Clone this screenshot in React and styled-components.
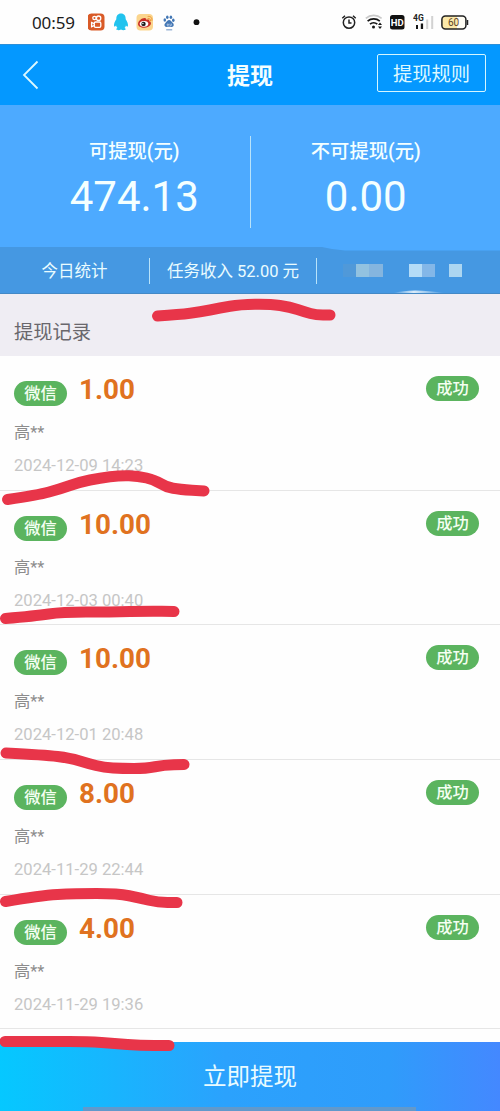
import React from "react";
import styled, { createGlobalStyle } from "styled-components";

const GlobalStyle = createGlobalStyle`
	* {
		box-sizing: border-box;
	}
	body {
		margin: 0;
		background: #fefefe;
		font-family: Roboto, "Noto Sans CJK SC", sans-serif;
	}
`;

const Page = styled.div`
	position: relative;
	display: flex;
	flex-direction: column;
	width: 500px;
	height: 1111px;
	overflow: hidden;
	background: #fefefe;
`;

const StatusBar = styled.div`
	display: flex;
	justify-content: space-between;
	align-items: center;
	height: 44px;
	padding: 0 31px 0 32px;
	background: #fefefe;
`;

const StatusGroup = styled.div`
	display: flex;
	align-items: center;
	gap: ${(props) => props.$gap};
	svg {
		display: block;
	}
`;

const Clock = styled.span`
	width: 48px;
	font-family: "Noto Sans", sans-serif;
	font-size: 17px;
	letter-spacing: -0.1px;
	color: #1c1c1c;
`;

const Header = styled.header`
	display: grid;
	grid-template-columns: 1fr auto 1fr;
	align-items: center;
	height: 61px;
	padding: 0 14px 0 22px;
	background: #0498ff;
	color: #f4feff;
	border-top: 1px solid #2c8fd8;
`;

const Title = styled.h1`
	margin: 3px 8px 0 0;
	font-size: 23px;
	font-weight: 700;
	line-height: 30px;
`;

const RulesButton = styled.button`
	justify-self: end;
	width: 109px;
	height: 38px;
	margin-bottom: 4px;
	padding: 0 0 1px;
	border: 1.5px solid #d4f6ff;
	border-radius: 2px;
	background: transparent;
	color: #dcf8ff;
	font-family: inherit;
	font-size: 19.3px;
`;

const Balances = styled.section`
	display: flex;
	align-items: flex-start;
	height: 142px;
	padding-top: 31px;
	background: #4daaff;
	color: #f4ffff;
`;

const Balance = styled.div`
	display: flex;
	flex: 1;
	flex-direction: column;
	align-items: center;
	padding-${(props) => props.$inset}: 19px;
`;

const BalanceLabel = styled.span`
	margin-top: 2px;
	font-size: 19.3px;
	font-weight: 500;
	line-height: 28px;
`;

const BalanceValue = styled.span`
	margin-top: 7px;
	font-size: 42px;
	line-height: 48px;
`;

const Divider = styled.i`
	width: 1px;
	height: ${(props) => props.$height};
	background: #b8e3fa;
`;

const Stats = styled.section`
	display: flex;
	align-items: center;
	height: 47px;
	background: #4598e2;
	color: #eafcff;
	font-size: 16.5px;
`;

const Stat = styled.span`
	width: ${(props) => props.$width};
	padding-bottom: 1px;
	text-align: center;
	white-space: nowrap;
`;

const Mosaic = styled.div`
	display: grid;
	grid-template-columns: repeat(9, 13.2px);
	height: 13px;
	margin-left: 26px;
`;

const Tile = styled.i`
	background: ${(props) => props.color};
`;

const SectionTitle = styled.h2`
	height: 62px;
	margin: 0;
	padding: 25px 14px 0;
	background: #efedf3;
	color: #69676c;
	font-size: 19.3px;
	font-weight: 400;
	line-height: 28px;
`;

const Records = styled.ul`
	height: 686px;
	margin: 0;
	padding: 0;
	list-style: none;
`;

const Record = styled.li`
	height: 134.7px;
	padding: 17px 21px 0 14px;
	border-bottom: 1px solid #e6e6e6;
`;

const RecordTop = styled.div`
	display: flex;
	height: 33px;
`;

const Badge = styled.span`
	align-self: ${(props) => props.$align};
	width: 53px;
	height: 25px;
	margin-top: 3px;
	border-radius: 13px;
	background: #5bb45f;
	color: #f4fff2;
	font-size: 16.3px;
	font-weight: 500;
	line-height: 26px;
	text-align: center;
`;

const Amount = styled.strong`
	flex: 1;
	padding-left: 12px;
	color: #e07220;
	font-size: 27.8px;
	font-weight: 700;
	line-height: 33px;
`;

const Name = styled.div`
	margin-top: 16px;
	color: #8c8c8c;
	font-size: 16.3px;
	line-height: 22px;
`;

const Time = styled.div`
	margin-top: 11px;
	color: #c6c6c6;
	font-size: 16.6px;
	line-height: 22px;
`;

const Submit = styled.button`
	height: 69px;
	padding: 0 0 3px;
	border: 0;
	background: linear-gradient(90deg, #05c8ff 0%, #2ba2fd 45%, #2f9cfb 78%, #4488ff 100%);
	color: #e9fbff;
	font-family: inherit;
	font-size: 23.5px;
`;

/* pen strokes drawn over the whole screen */
const Marks = styled.svg`
	position: absolute;
	top: 0;
	left: 0;
	pointer-events: none;
`;

const records = [
	{ amount: "1.00", time: "2024-12-09 14:23" },
	{ amount: "10.00", time: "2024-12-03 00:40" },
	{ amount: "10.00", time: "2024-12-01 20:48" },
	{ amount: "8.00", time: "2024-11-29 22:44" },
	{ amount: "4.00", time: "2024-11-29 19:36" },
];

const tiles = [
	"#5099d9",
	"#92c2e0",
	"#84b5df",
	"transparent",
	"transparent",
	"#b4dcf7",
	"#83b7e8",
	"transparent",
	"#acd6f1",
];

const strokes = [
	[[157.5, 316], [180, 314.5], [200, 312], [220, 308], [240, 304.5], [270, 304], [290, 307], [305, 312], [316, 315], [330, 315]],
	[[7.5, 499.5], [38, 495], [60, 489], [80, 482], [100, 478], [120, 475.5], [138, 476], [155, 480], [166, 487], [180, 489.5], [204, 491]],
	[[5.5, 618.5], [35, 616], [62, 612], [110, 612], [150, 611], [174, 611.5]],
	[[6, 753], [45, 755], [70, 758], [88, 763.5], [104, 767.5], [122, 768.5], [146, 768.5], [164, 765], [184, 764.5]],
	[[5.5, 901.5], [40, 895.5], [75, 893.5], [118, 893.5], [140, 898], [158, 902.5], [177, 902.5]],
	[[5, 1041.5], [50, 1041.5], [88, 1041.5], [115, 1043.5], [140, 1045.5], [169, 1045.5]],
];

// curve through the midpoints so the pen line has no corners
const toPath = (points) => {
	let d = `M${points[0]}`;
	for (let i = 1; i < points.length - 1; i++) {
		const [x, y] = points[i];
		const [nextX, nextY] = points[i + 1];
		d += `Q${x} ${y} ${(x + nextX) / 2} ${(y + nextY) / 2}`;
	}
	return `${d}L${points[points.length - 1]}`;
};

const AppIcons = () => (
	<svg width="114" height="20" viewBox="0 0 114 20">
		{/* kuaishou */}
		<rect x="-.5" y="1.5" width="17" height="17" rx="4" fill="#d95a27" />
		<g fill="none" stroke="#fff" strokeWidth="1.3">
			<circle cx="6.5" cy="6" r="1.7" />
			<circle cx="10.600" cy="6.200" r="2.200" />
			<rect x="6.300" y="10" width="6.500" height="5.300" rx="1.300" />
			<path d="M6 11.600 3.600 10.500v4.200L6 13.700" />
		</g>
		{/* qq */}
		<path
			d="M33 1.500c-3.200 0-4.800 2.300-4.700 5.700-1.500 2.300-2.800 5-2.200 7 .6.800 1.400-.2 2-.8.2 1 .7 1.900 1.400 2.500-1 .4-1.400 1-1.100 1.600.6.900 3.500.8 4.600.1 1.100.7 4 .8 4.600-.1.300-.6-.1-1.200-1.100-1.600.7-.6 1.200-1.500 1.400-2.500.6.600 1.400 1.600 2 .8.600-2-.7-4.700-2.200-7C37.800 3.800 36.200 1.500 33 1.500z"
			fill="#22c3ee"
		/>
		{/* weibo */}
		<rect x="48.500" y="2" width="16.500" height="16.500" rx="4" fill="#fbd58d" />
		<path d="M50 12c0-3 3.800-6 6.600-6 1.700 0 1.700 1.200 1.500 1.800 2-.8 3.700-.4 3.200 1.400 4.200 2-.2 6.500-5.100 6.500-3.400 0-6.200-1.500-6.200-3.700z" fill="#c92f26" />
		<ellipse cx="56" cy="11.800" rx="4.300" ry="2.900" fill="#fff" />
		<circle cx="55.500" cy="11.900" r="2.200" fill="#1b1b1b" />
		<circle cx="54.900" cy="11.500" r=".7" fill="#fff" />
		<path d="M59.600 6.600c2-.5 3.300.8 2.900 2.700M59.700 4.500c3-.6 4.800 1.600 4.200 4.300" fill="none" stroke="#ee9738" strokeWidth="1" />
		{/* baidu */}
		<g fill="#4377b5">
			<ellipse cx="76.800" cy="8" rx="1.300" ry="1.800" />
			<ellipse cx="79.300" cy="5.200" rx="1.300" ry="1.800" />
			<ellipse cx="82.900" cy="5.200" rx="1.300" ry="1.800" />
			<ellipse cx="85.300" cy="8.300" rx="1.300" ry="1.800" />
			<path d="M81.100 8c-1.700 0-2.200 1.600-3.500 2.700-1.900 1.600-1.200 4.200.9 4.200 1 0 1.600-.2 2.600-.2s1.600.2 2.600.2c2.200 0 2.800-2.700.9-4.200-1.300-1.100-1.800-2.700-3.500-2.700z" />
			<rect x="78.200" y="17.200" width="6" height="1.200" opacity=".65" />
		</g>
		<path d="M79.200 12h1.200v1.400h-1.200zM81.900 11.600v1.800h1.500v-1.800" fill="none" stroke="#d6e3f4" strokeWidth=".6" />
		<circle cx="108.500" cy="10.200" r="2.900" fill="#111" />
	</svg>
);

const AlarmIcon = () => (
	<svg width="16" height="16" viewBox="0 0 16 16" fill="none" stroke="#222" strokeWidth="1.500">
		<circle cx="8" cy="8.600" r="5.700" />
		<path d="M8 5.500v3.500h2.500M1.300 4.200 4 1.700M14.700 4.200 12 1.700" />
	</svg>
);

const WifiIcon = () => (
	<svg width="18" height="16" viewBox="0 0 18 16" fill="none" strokeWidth="1.700">
		<path d="M.8 4.300c4.500-3.800 11.300-3.800 15.800 0" stroke="#c9c9c9" />
		<path d="M2.600 7.200c3.500-3 8.700-3 12.200 0M5 10.200c2-1.800 5.200-1.800 7.300 0" stroke="#151515" />
		<circle cx="8.500" cy="13" r="1.500" fill="#151515" />
		<path d="m13 11 2-2.600 2 2.600zM13 12.500l2 2.600 2-2.600z" fill="#151515" />
	</svg>
);

const HdIcon = () => (
	<svg width="15" height="15" viewBox="0 0 15 15">
		<rect width="14.500" height="14.500" rx="2.500" fill="#111" />
		<text x="7.200" y="10.800" fill="#fff" fontFamily="Roboto" fontSize="9.500" fontWeight="700" textAnchor="middle">
			HD
		</text>
	</svg>
);

const SignalIcon = () => (
	<svg width="21" height="16" viewBox="0 0 21 16">
		<text x="0" y="7.200" fill="#222" fontFamily="Roboto" fontSize="8.500" fontWeight="700">
			4G
		</text>
		<path d="M3 11h2v4H3zM7.800 9.500h2.300V15H7.800z" fill="#151515" />
		<path d="M13.200 5.500h2V15h-2zM18.200 2h2v13h-2z" fill="#d2d2d2" />
	</svg>
);

const BatteryIcon = () => (
	<svg width="28" height="15" viewBox="0 0 28 15">
		<rect x=".9" y=".9" width="24" height="13" rx="3.500" fill="#fffdf4" />
		<path d="M4 1h12v13H4a3 3 0 0 1-3-3V4a3 3 0 0 1 3-3z" fill="#fbe8a9" />
		<rect x=".9" y=".9" width="24" height="13" rx="3.500" fill="none" stroke="#222" strokeWidth="1.500" />
		<path d="M26.500 5v5" stroke="#222" strokeWidth="1.500" />
		<text x="12.500" y="11" fill="#5c4526" fontFamily="Roboto" fontSize="10" textAnchor="middle">
			60
		</text>
	</svg>
);

const RecordItem = (props) => {
	return (
		<Record>
			<RecordTop>
				<Badge $align="flex-end">微信</Badge>
				<Amount>{props.amount}</Amount>
				<Badge $align="flex-start">成功</Badge>
			</RecordTop>
			<Name>高**</Name>
			<Time>{props.time}</Time>
		</Record>
	);
};

const App = () => {
	return (
		<Page>
			<GlobalStyle />
			<StatusBar>
				<StatusGroup $gap="8px">
					<Clock>00:59</Clock>
					<AppIcons />
				</StatusGroup>
				<StatusGroup $gap="7.5px">
					<AlarmIcon />
					<WifiIcon />
					<HdIcon />
					<SignalIcon />
					<BatteryIcon />
				</StatusGroup>
			</StatusBar>
			<Header>
				<svg width="17" height="30" viewBox="0 0 17 30" fill="none" stroke="#dcf8ff" strokeWidth="1.800">
					<path d="M15.500 1.500 2 15l13.500 13.500" />
				</svg>
				<Title>提现</Title>
				<RulesButton>提现规则</RulesButton>
			</Header>
			<Balances>
				<Balance $inset="left">
					<BalanceLabel>可提现(元)</BalanceLabel>
					<BalanceValue>474.13</BalanceValue>
				</Balance>
				<Divider $height="92px" />
				<Balance $inset="right">
					<BalanceLabel>不可提现(元)</BalanceLabel>
					<BalanceValue>0.00</BalanceValue>
				</Balance>
			</Balances>
			<Stats>
				<Stat $width="149px">今日统计</Stat>
				<Divider $height="26px" />
				<Stat $width="166px">任务收入 52.00 元</Stat>
				<Divider $height="26px" />
				<Mosaic>
					{tiles.map((color, index) => (
						<Tile key={index} color={color} />
					))}
				</Mosaic>
			</Stats>
			<SectionTitle>提现记录</SectionTitle>
			<Records>
				{records.map((record, index) => (
					<RecordItem key={index} amount={record.amount} time={record.time} />
				))}
			</Records>
			<Submit>立即提现</Submit>
			<Marks width="500" height="1111" viewBox="0 0 500 1111" fill="none">
				<defs>
					<linearGradient id="glow">
						<stop offset="0" stopColor="#d5e9fa" stopOpacity="0" />
						<stop offset=".4" stopColor="#dcecf9" />
						<stop offset="1" stopColor="#d5e9fa" stopOpacity="0" />
					</linearGradient>
				</defs>
				<path d="M322 247H500V250.500H345Q334 250 322 247Z" fill="#4daaff" />
				<path d="M393 293Q412 288 445 293Z" fill="url(#glow)" />
				<path d="M0 293.500H500" stroke="#4389c6" />
				<path d="M83 1109H416" stroke="#6299cb" strokeWidth="4" />
				{strokes.map((points, index) => (
					<path key={index} d={toPath(points)} stroke="#e83549" strokeWidth="11" strokeLinecap="round" strokeLinejoin="round" />
				))}
			</Marks>
		</Page>
	);
};

export default App;
